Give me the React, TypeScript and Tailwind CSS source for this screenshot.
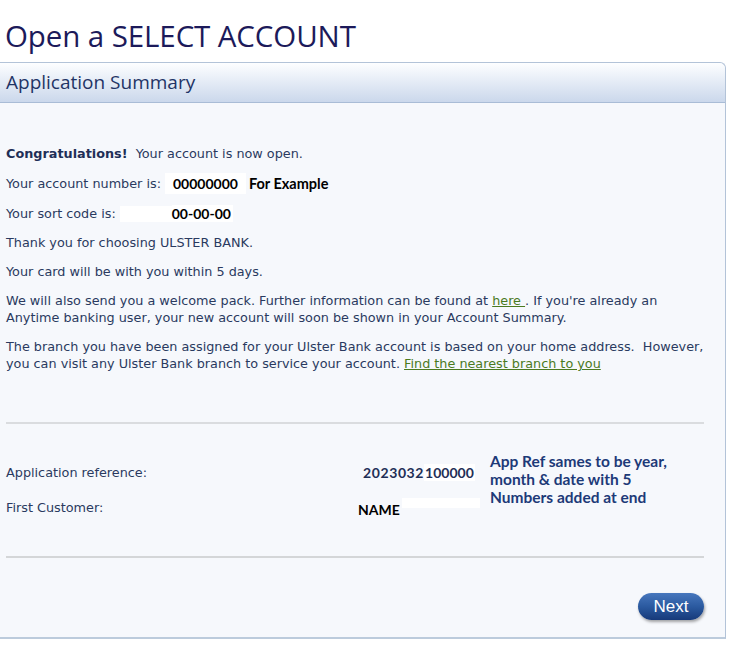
import React from "react";

const body = "font-['DejaVu_Sans',Verdana,sans-serif]";
const cal = "font-['Lato','Open_Sans',sans-serif]";

export default function App() {
  return (
    <div className="w-[737px] h-[659px] bg-white overflow-hidden">
      <h1 className="pt-[19px] pl-[5px] h-[62px] text-[29.5px] leading-[34px] text-[#1c1a5a] font-['Open_Sans',Tahoma,sans-serif] tracking-[-0.1px]">
        Open a SELECT ACCOUNT
      </h1>
      <div className="w-[726px] h-[577px] border-t border-r border-b-2 border-[#b3c3d8] border-b-[#bccbdc] rounded-tr-[6px] bg-[#f6f8fc] flex flex-col">
        <div className="h-[40px] shrink-0 border-b border-[#a9bcd6] bg-gradient-to-b from-[#fdfeff] to-[#cbd8ec] rounded-tr-[6px] pl-[6px] flex items-center">
          <span className="text-[19px] text-[#1f3466] font-['Open_Sans',Tahoma,sans-serif]">Application Summary</span>
        </div>
        <div className={`${body} text-[12.8px] leading-[17px] text-[#2a3a60] pt-[42px] px-[6px]`}>
          <p className="mb-[13px]">
            <b className="text-[#1f2f57]">Congratulations!</b>&nbsp; Your account is now open.
          </p>
          <p className="mb-[13px] flex items-center h-[17px]">
            <span>Your account number is:</span>
            <span className={`${cal} ml-[4px] bg-white pl-[8px] pr-[8px] py-[2px] font-bold text-[14px] text-black`}>00000000</span>
            <span className={`${cal} ml-[3px] font-bold text-[14.5px] text-black`}>For Example</span>
          </p>
          <p className="mb-[12px] flex items-center h-[17px]">
            <span>Your sort code is:</span>
            <span className="ml-[4px] w-[52px] h-[16px] bg-white"></span>
            <span className={`${cal} bg-white font-bold text-[14px] text-black pr-[2px]`}>00-00-00</span>
          </p>
          <p className="mb-[12px]">Thank you for choosing ULSTER BANK.</p>
          <p className="mb-[12px]">Your card will be with you within 5 days.</p>
          <p className="mb-[12px] w-[700px]">
            We will also send you a welcome pack. Further information can be found at{" "}
            <a className="text-[#4b7a1f] underline">here </a>. If you're already an Anytime banking user, your new
            account will soon be shown in your Account Summary.
          </p>
          <p className="mb-[12px] w-[700px]">
            The branch you have been assigned for your Ulster Bank account is based on your home address.&nbsp; However,
            you can visit any Ulster Bank branch to service your account.{" "}
            <a className="text-[#4b7a1f] underline">Find the nearest branch to you</a>
          </p>
          <div className="mt-[50px] h-[2px] w-[698px] bg-[#dadcdf]"></div>
          <div className="flex pt-[24px] h-[132px]">
            <div className="w-[352px] pt-[16px]">
              <div className="h-[17px]">Application reference:</div>
              <div className="h-[17px] mt-[18px]">First Customer:</div>
            </div>
            <div className="w-[132px] pt-[16px]">
              <div className={`${cal} font-bold text-[14px] h-[17px] leading-[17px] pl-[5px] flex`}>
                <span className="text-[#1f2f57] tracking-[0.6px]">2023032</span>
                <span className="bg-white text-[#1f2f57] px-[1px]">100000</span>
              </div>
              <div className={`${cal} font-bold text-[14px] text-black h-[17px] leading-[17px] mt-[17px] flex items-start`}>
                <span className="pt-[3px]">NAME</span>
                <span className="w-[78px] h-[10px] bg-white ml-[2px]"></span>
              </div>
            </div>
            <div className={`${cal} font-bold text-[15.5px] leading-[18px] text-[#1d3a78] mt-[4px]`}>
              App Ref sames to be year,
              <br />
              month &amp; date with 5
              <br />
              Numbers added at end
            </div>
          </div>
          <div className="h-[2px] w-[698px] bg-[#d4d6d8]"></div>
          <div className="flex justify-end w-[698px] pt-[35px]">
            <button className="w-[66px] h-[27px] rounded-full bg-gradient-to-b from-[#4777bd] via-[#2b5aa0] to-[#173a7a] text-white text-[17px] font-['Liberation_Sans',Arial,sans-serif] shadow-[1px_2px_3px_rgba(0,0,0,0.35)] leading-[27px]">
              Next
            </button>
          </div>
        </div>
      </div>
    </div>
  );
}
